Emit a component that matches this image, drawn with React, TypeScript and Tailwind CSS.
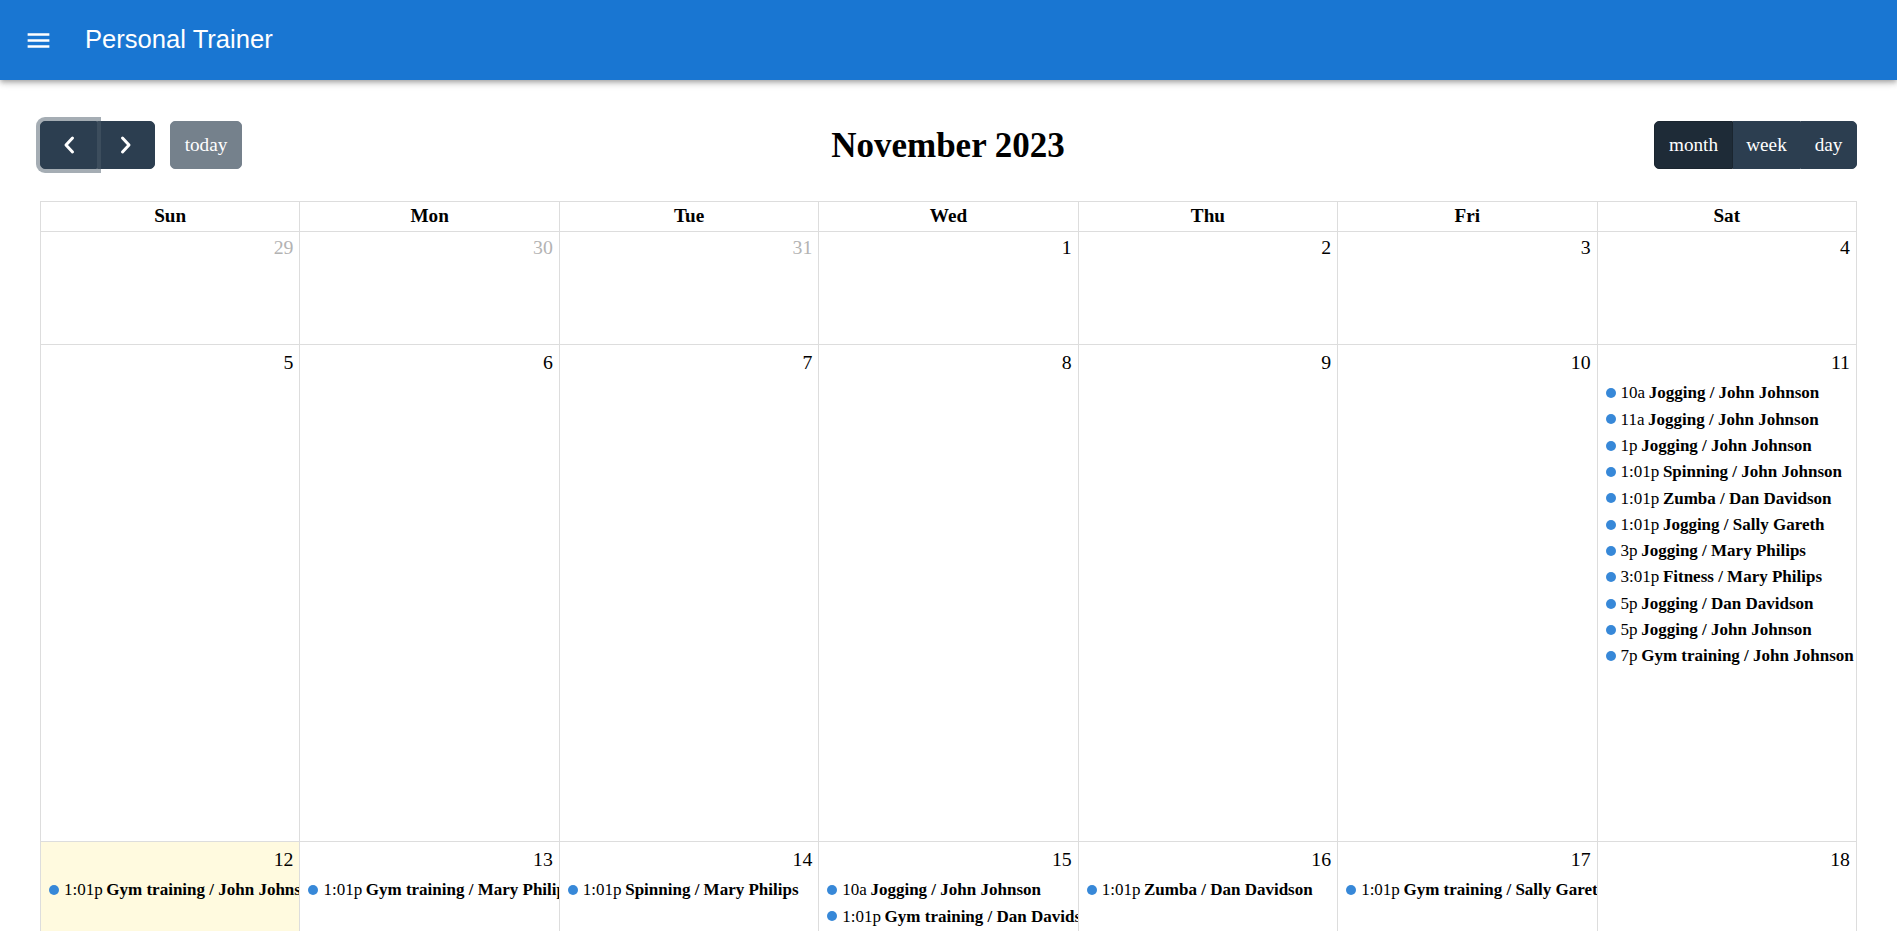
import React from "react";

type Ev = { t: string; title: string };

const sat11: Ev[] = [
  { t: "10a", title: "Jogging / John Johnson" },
  { t: "11a", title: "Jogging / John Johnson" },
  { t: "1p", title: "Jogging / John Johnson" },
  { t: "1:01p", title: "Spinning / John Johnson" },
  { t: "1:01p", title: "Zumba / Dan Davidson" },
  { t: "1:01p", title: "Jogging / Sally Gareth" },
  { t: "3p", title: "Jogging / Mary Philips" },
  { t: "3:01p", title: "Fitness / Mary Philips" },
  { t: "5p", title: "Jogging / Dan Davidson" },
  { t: "5p", title: "Jogging / John Johnson" },
  { t: "7p", title: "Gym training / John Johnson" },
];

type Day = { n: number; other?: boolean; today?: boolean; events?: Ev[] };

const weeks: { h: string; days: Day[] }[] = [
  {
    h: "h-[115px]",
    days: [
      { n: 29, other: true },
      { n: 30, other: true },
      { n: 31, other: true },
      { n: 1 },
      { n: 2 },
      { n: 3 },
      { n: 4 },
    ],
  },
  {
    h: "h-[497px]",
    days: [
      { n: 5 },
      { n: 6 },
      { n: 7 },
      { n: 8 },
      { n: 9 },
      { n: 10 },
      { n: 11, events: sat11 },
    ],
  },
  {
    h: "h-[120px]",
    days: [
      { n: 12, today: true, events: [{ t: "1:01p", title: "Gym training / John Johnson" }] },
      { n: 13, events: [{ t: "1:01p", title: "Gym training / Mary Philips" }] },
      { n: 14, events: [{ t: "1:01p", title: "Spinning / Mary Philips" }] },
      {
        n: 15,
        events: [
          { t: "10a", title: "Jogging / John Johnson" },
          { t: "1:01p", title: "Gym training / Dan Davidson" },
        ],
      },
      { n: 16, events: [{ t: "1:01p", title: "Zumba / Dan Davidson" }] },
      { n: 17, events: [{ t: "1:01p", title: "Gym training / Sally Gareth" }] },
      { n: 18 },
    ],
  },
];

const dayNames = ["Sun", "Mon", "Tue", "Wed", "Thu", "Fri", "Sat"];

function Chevron({ dir }: { dir: "left" | "right" }) {
  return (
    <svg width="14" height="20" viewBox="0 0 14 20" fill="none">
      <polyline
        points={dir === "left" ? "10.5,3 4,10 10.5,17" : "3.5,3 10,10 3.5,17"}
        stroke="white"
        strokeWidth="3"
        strokeLinecap="round"
        strokeLinejoin="round"
      />
    </svg>
  );
}

function Cell({ d }: { d: Day }) {
  return (
    <div
      className={
        d.today
          ? "min-w-0 overflow-hidden border-r border-b border-[#dddddd] bg-[rgba(255,220,40,0.15)]"
          : "min-w-0 overflow-hidden border-r border-b border-[#dddddd]"
      }
    >
      <div
        className={
          d.other
            ? "flex justify-end pt-[6px] pr-[6px] text-[19.8px] leading-[22px] text-[#b3b3b3]"
            : "flex justify-end pt-[6px] pr-[6px] text-[19.8px] leading-[22px] text-black"
        }
      >
        {d.n}
      </div>
      {d.events && (
        <div className="pt-[7px]">
          {d.events.map((e, i) => (
            <div
              key={i}
              className="flex h-[26.3px] items-center overflow-hidden whitespace-nowrap text-[17px] text-black"
            >
              <span className="ml-[8px] mr-[5px] h-[10px] w-[10px] shrink-0 rounded-full bg-[#3788d8]" />
              <span className="mr-[3.6px]">{e.t}</span>
              <span className="font-bold">{e.title}</span>
            </div>
          ))}
        </div>
      )}
    </div>
  );
}

export default function App() {
  return (
    <div className="min-h-screen bg-white font-['Liberation_Serif','Times_New_Roman',serif] text-black">
      <header className="relative z-10 flex h-[80px] items-center bg-[#1976d2] shadow-[0px_2px_4px_-1px_rgba(0,0,0,0.2),0px_4px_5px_0px_rgba(0,0,0,0.14),0px_1px_10px_0px_rgba(0,0,0,0.12)]">
        <svg className="ml-[24px] h-[29px] w-[29px]" viewBox="0 0 24 24" fill="white">
          <path d="M3 18h18v-2H3zm0-5h18v-2H3zm0-7v2h18V6z" />
        </svg>
        <div className="ml-[32px] font-['Liberation_Sans',Arial,sans-serif] text-[25.6px] leading-none text-white">
          Personal Trainer
        </div>
      </header>

      <main className="px-[40px] pt-[41px]">
        <div className="mb-[32px] flex h-[48px] items-center justify-between">
          <div className="flex items-center">
            <div className="flex h-[48px]">
              <button className="relative z-10 flex w-[57px] items-center justify-center rounded-l-[5px] border border-[#2c3e50] bg-[#2c3e50] shadow-[0_0_0_4px_rgba(76,91,106,0.5)]">
                <Chevron dir="left" />
              </button>
              <button className="flex w-[58px] items-center justify-center rounded-r-[5px] border border-[#2c3e50] bg-[#2c3e50]">
                <Chevron dir="right" />
              </button>
            </div>
            <button className="ml-[15px] h-[48px] w-[72px] rounded-[5px] border border-[#2c3e50] bg-[#2c3e50] text-[19.2px] text-white opacity-65">
              today
            </button>
          </div>
          <h2 className="text-[35px] font-bold leading-none">November 2023</h2>
          <div className="flex h-[48px] text-[19.2px] text-white">
            <button className="w-[79px] rounded-l-[5px] border border-[#1a252f] bg-[#1e2b37]">month</button>
            <button className="w-[67px] border border-[#2c3e50] bg-[#2c3e50]">week</button>
            <button className="w-[57px] rounded-r-[5px] border border-[#2c3e50] bg-[#2c3e50]">day</button>
          </div>
        </div>

        <div className="border-l border-t border-[#dddddd]">
          <div className="grid h-[28px] grid-cols-7">
            {dayNames.map((n) => (
              <div
                key={n}
                className="flex items-center justify-center border-r border-b border-[#dddddd] text-[19.2px] font-bold"
              >
                {n}
              </div>
            ))}
          </div>
          {weeks.map((w, i) => (
            <div key={i} className={`grid grid-cols-7 ${w.h}`}>
              {w.days.map((d) => (
                <Cell key={d.n} d={d} />
              ))}
            </div>
          ))}
        </div>
      </main>
    </div>
  );
}
